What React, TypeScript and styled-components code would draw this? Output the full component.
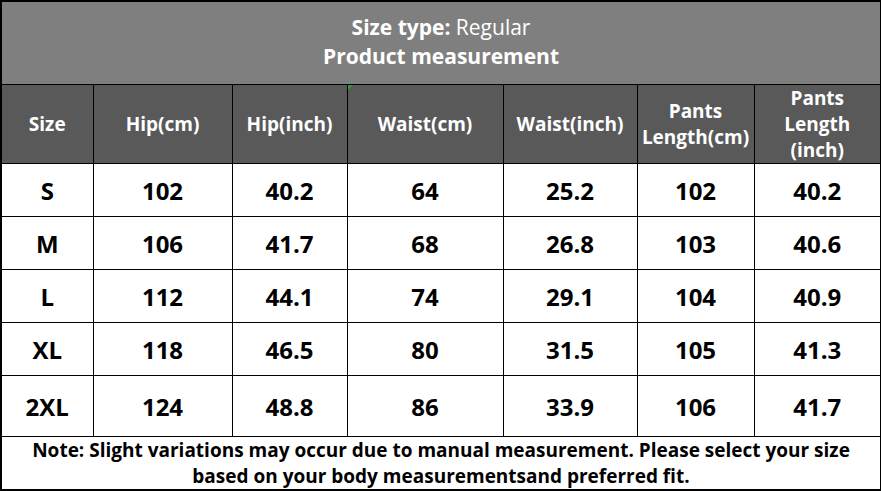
import React from 'react';
import styled, { createGlobalStyle } from 'styled-components';

const GlobalStyle = createGlobalStyle`
  html, body {
    margin: 0;
    padding: 0;
    background: #ffffff;
  }
  body {
    font-family: 'Open Sans', 'Noto Sans', 'Liberation Sans', sans-serif;
  }
`;

const columns = [
  { label: 'Size', width: 92 },
  { label: 'Hip(cm)', width: 139 },
  { label: 'Hip(inch)', width: 115 },
  { label: 'Waist(cm)', width: 156 },
  { label: 'Waist(inch)', width: 134 },
  { label: 'Pants Length(cm)', width: 117 },
  { label: 'Pants Length (inch)', width: 127 },
];

const rows = [
  ['S', '102', '40.2', '64', '25.2', '102', '40.2'],
  ['M', '106', '41.7', '68', '26.8', '103', '40.6'],
  ['L', '112', '44.1', '74', '29.1', '104', '40.9'],
  ['XL', '118', '46.5', '80', '31.5', '105', '41.3'],
  ['2XL', '124', '48.8', '86', '33.9', '106', '41.7'],
];

export default function App() {
  return (
    <>
      <GlobalStyle />
      <SizeTable>
        <colgroup>
          {columns.map((c) => (
            <col key={c.label} style={{ width: c.width }} />
          ))}
        </colgroup>
        <thead>
          <tr>
            <TitleCell colSpan={7}>
              <div>
                <strong>Size type:</strong> Regular
              </div>
              <div>
                <strong>Product measurement</strong>
              </div>
            </TitleCell>
          </tr>
          <tr>
            {columns.map((c, i) => (
              <HeadCell key={c.label} $marker={i === 3}>
                {c.label === 'Pants Length(cm)' ? (
                  <>
                    Pants
                    <br />
                    Length(cm)
                  </>
                ) : c.label === 'Pants Length (inch)' ? (
                  <>
                    Pants
                    <br />
                    Length
                    <br />
                    (inch)
                  </>
                ) : (
                  c.label
                )}
              </HeadCell>
            ))}
          </tr>
        </thead>
        <tbody>
          {rows.map((r, idx) => (
            <DataRow key={r[0]} $tall={idx === rows.length - 1}>
              {r.map((v, i) => (
                <DataCell key={i}>{v}</DataCell>
              ))}
            </DataRow>
          ))}
          <tr>
            <NoteCell colSpan={7}>
              Note: Slight variations may occur due to manual measurement. Please select your size
              <br />
              based on your body measurementsand preferred fit.
            </NoteCell>
          </tr>
        </tbody>
      </SizeTable>
    </>
  );
}

const SizeTable = styled.table`
  width: 880px;
  table-layout: fixed;
  border-collapse: collapse;
  border: 2px solid #000;
  color: #000;

  & td,
  & th {
    border: 1px solid #000;
    padding: 0;
    text-align: center;
    vertical-align: middle;
  }
`;

const TitleCell = styled.th`
  height: 80px;
  background: #7f7f7f;
  color: #ffffff;
  font-size: 21px;
  font-weight: 400;
  line-height: 29px;
  padding-bottom: 2px !important;

  & strong {
    font-weight: 700;
  }
`;

const HeadCell = styled.th<{ $marker?: boolean }>`
  position: relative;
  height: 78px;
  background: #595959;
  color: #ffffff;
  font-size: 19px;
  font-weight: 700;
  line-height: 26px;

  &::before {
    content: '';
    display: ${({ $marker }) => ($marker ? 'block' : 'none')};
    position: absolute;
    left: 0;
    top: 0;
    width: 0;
    height: 0;
    border-top: 5px solid #2e9e2e;
    border-right: 5px solid transparent;
  }
`;

const DataRow = styled.tr<{ $tall?: boolean }>`
  height: ${({ $tall }) => ($tall ? '61px' : '53px')};
`;

const DataCell = styled.td`
  font-size: 24px;
  font-weight: 700;
`;

const NoteCell = styled.td`
  height: 52px;
  font-size: 19px;
  font-weight: 700;
  line-height: 26px;
`;
